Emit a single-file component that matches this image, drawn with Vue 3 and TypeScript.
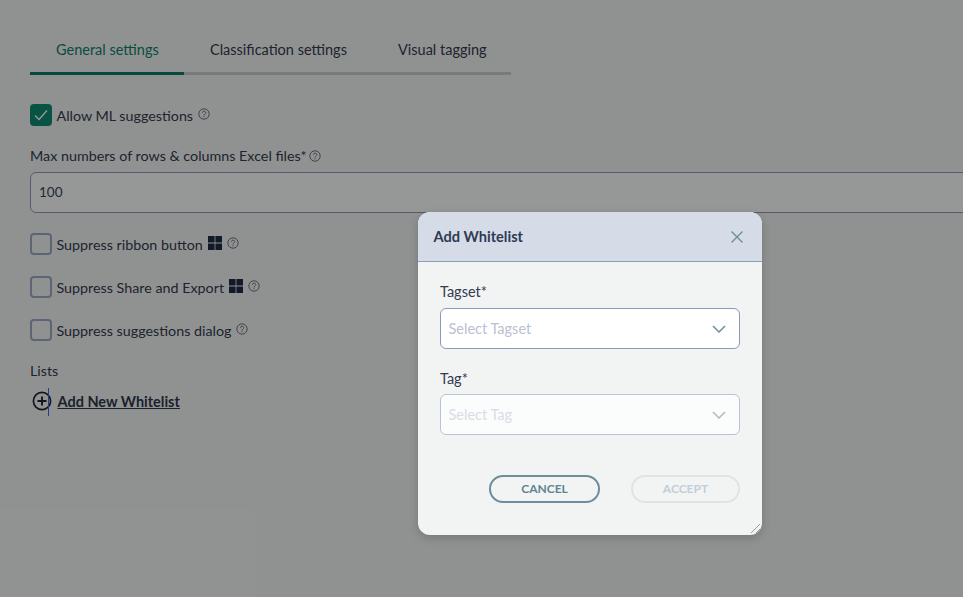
<script setup lang="ts">
const tabs = [
  { label: 'General settings', width: 154, active: true },
  { label: 'Classification settings', width: 188, active: false },
  { label: 'Visual tagging', width: 139, active: false },
]
const suppressions = [
  { label: 'Suppress ribbon button', windows: true },
  { label: 'Suppress Share and Export', windows: true },
  { label: 'Suppress suggestions dialog', windows: false },
]
</script>

<template>
  <div class="page">
    <nav class="tabs">
      <a
        v-for="tab in tabs"
        :key="tab.label"
        class="tab"
        :class="{ active: tab.active }"
        :style="{ width: tab.width + 'px' }"
      >{{ tab.label }}</a>
    </nav>

    <label class="check-row first">
      <span class="box checked">
        <svg width="16" height="16" viewBox="0 0 16 16"><path d="M2 8.500l4 4 8-9" fill="none" stroke="#fff" stroke-width="1.300" /></svg>
      </span>
      <span>Allow ML suggestions</span>
      <svg class="help after" viewBox="0 0 12 12"><use href="#help-glyph" /></svg>
    </label>

    <div class="field-label">
      <span>Max numbers of rows &amp; columns Excel files*</span>
      <svg class="help" viewBox="0 0 12 12"><use href="#help-glyph" /></svg>
    </div>
    <div class="text-input">100</div>

    <label v-for="item in suppressions" :key="item.label" class="check-row">
      <span class="box"></span>
      <span>{{ item.label }}</span>
      <svg v-if="item.windows" class="win" viewBox="0 0 14 14">
        <path d="M0 0h6.600v6.600H0zM7.400 0H14v6.600H7.400zM0 7.400h6.600V14H0zM7.400 7.400H14V14H7.400z" fill="#1f2a44" />
      </svg>
      <svg class="help after" viewBox="0 0 12 12"><use href="#help-glyph" /></svg>
    </label>

    <div class="lists-label">Lists</div>
    <a class="add-link">
      <span class="add-icon">
        <svg width="20" height="20" viewBox="0 0 20 20">
          <circle cx="10" cy="10" r="8.600" fill="none" stroke="#1f2430" stroke-width="1.700" />
          <path d="M5.500 10h9M10 5.500v9" fill="none" stroke="#1f2430" stroke-width="1.900" />
        </svg>
        <span class="caret"></span>
      </span>
      <span>Add New Whitelist</span>
    </a>

    <svg class="defs" width="0" height="0">
      <defs>
        <g id="help-glyph" fill="none" stroke="#5f6672" stroke-width="0.900">
          <circle cx="6" cy="6" r="5.200" />
          <path d="M4.400 4.800c0-2.100 3.300-2.100 3.300-.1 0 1.300-1.700 1.300-1.700 2.800" />
          <path d="M6 8.300v1" />
        </g>
      </defs>
    </svg>

    <div class="scrim"></div>

    <section class="modal">
      <header class="modal-head">
        <h2>Add Whitelist</h2>
        <svg width="14" height="14" viewBox="0 0 14 14"><path d="M1.500 1.500l11 11M12.500 1.500l-11 11" fill="none" stroke="#6f8d99" stroke-width="1.400" /></svg>
      </header>
      <div class="modal-body">
        <div class="modal-label">Tagset*</div>
        <div class="select">
          <span>Select Tagset</span>
          <svg width="14" height="8" viewBox="0 0 14 8"><path d="M1 1l6 6 6-6" fill="none" stroke="#6f8d99" stroke-width="1.500" /></svg>
        </div>
        <div class="modal-label second">Tag*</div>
        <div class="select disabled">
          <span>Select Tag</span>
          <svg width="14" height="8" viewBox="0 0 14 8"><path d="M1 1l6 6 6-6" fill="none" stroke="#a9bcc4" stroke-width="1.500" /></svg>
        </div>
        <div class="actions">
          <button class="btn cancel">CANCEL</button>
          <button class="btn accept">ACCEPT</button>
        </div>
      </div>
      <svg class="grip" width="11" height="11" viewBox="0 0 11 11"><path d="M1 10l9-9M6 10l4-4" fill="none" stroke="#9a9d9f" stroke-width="1" /></svg>
    </section>
  </div>
</template>

<style>
html, body { margin: 0; overflow: hidden; }
</style>

<style scoped>
.page {
  position: relative;
  width: 963px;
  height: 597px;
  box-sizing: border-box;
  padding: 32px 0 0 30px;
  overflow: hidden;
  background: #f1f3f3;
  color: #333b4e;
  font-family: Lato, "Liberation Sans", sans-serif;
  font-size: 14.3px;
}
.tabs {
  display: flex;
  width: 481px;
  height: 43px;
  box-sizing: border-box;
  border-bottom: 3px solid #c9ccd1;
}
.tab {
  box-sizing: border-box;
  height: 43px;
  padding-top: 9px;
  padding-left: 26px;
  line-height: 18px;
  font-size: 14.5px;
  white-space: nowrap;
}
.tab.active {
  color: #0d7f68;
  border-bottom: 3px solid #0c7a63;
}
.check-row {
  display: flex;
  align-items: center;
  height: 22px;
  margin-bottom: 21px;
}
.check-row.first { margin-top: 29px; margin-bottom: 21px; }
.box {
  display: flex;
  align-items: center;
  justify-content: center;
  width: 22px;
  height: 22px;
  box-sizing: border-box;
  margin-right: 4.5px;
  border: 2px solid #9aa7c4;
  border-radius: 4px;
  background: #f1f3f3;
}
.box.checked { background: #0f8a72; border-color: #0f8a72; }
.help { display: block; width: 12px; height: 12px; flex: none; }
.help.after { margin-left: 5px; margin-top: -3px; }
.win { display: block; width: 14px; height: 14px; margin-left: 5px; margin-top: -2px; flex: none; }
.field-label {
  display: flex;
  align-items: center;
  gap: 2px;
  height: 18px;
  line-height: 18px;
}
.text-input {
  width: 1000px;
  height: 41px;
  box-sizing: border-box;
  margin-top: 7px;
  margin-bottom: 20px;
  padding-left: 8px;
  border: 1px solid #8d99b8;
  border-radius: 6px;
  background: #fbfcfc;
  font-size: 13.500px;
  line-height: 38px;
  color: #3a4254;
}
.lists-label { line-height: 18px; margin-top: 21px; }
.add-link {
  display: flex;
  align-items: center;
  gap: 5.500px;
  height: 20px;
  margin-top: 11px;
  font-size: 14.500px;
  font-weight: 700;
  color: #2f3748;
  text-decoration: underline;
}
.add-icon { position: relative; display: block; width: 20px; height: 20px; margin-left: 2px; }
.add-icon svg { display: block; }
.caret {
  position: absolute;
  left: 16px;
  top: -3px;
  width: 1px;
  height: 28px;
  background: #3a6ae8;
}
.defs { position: absolute; }
.scrim {
  position: absolute;
  inset: 0;
  background: rgba(0, 0, 0, 0.4);
}
.modal {
  position: absolute;
  left: 418px;
  top: 212px;
  width: 344px;
  height: 323px;
  overflow: hidden;
  border-radius: 12px;
  background: #f2f4f4;
  box-shadow: 0 3px 10px rgba(0, 0, 0, 0.18);
}
.modal-head {
  display: flex;
  align-items: center;
  justify-content: space-between;
  height: 50px;
  box-sizing: border-box;
  padding: 0 18px 0 15.500px;
  background: #d5dce7;
  border-bottom: 1px solid #8a9fb8;
}
.modal-head h2 {
  margin: 0;
  font-size: 14.600px;
  font-weight: 700;
  color: #2f3a55;
}
.modal-body { padding: 21px 22px 0; }
.modal-label { line-height: 18px; color: #333b4e; font-size: 14.500px; }
.modal-label.second { margin-top: 21px; }
.select {
  display: flex;
  align-items: center;
  justify-content: space-between;
  height: 41px;
  box-sizing: border-box;
  margin-top: 7px;
  padding: 0 13px 0 7.500px;
  border: 1px solid #8d99b8;
  border-radius: 6px;
  background: #fff;
  font-size: 14.500px;
  color: #b9c1d0;
}
.select.disabled {
  margin-top: 6px;
  border-color: #b7c3d6;
  background: #fbfcfc;
  color: #d8dde5;
}
.actions {
  display: flex;
  justify-content: flex-end;
  gap: 31px;
  margin-top: 40px;
}
.btn {
  height: 28px;
  width: 111px;
  padding: 0 0 2px;
  box-sizing: border-box;
  border-radius: 14px;
  background: transparent;
  font-family: inherit;
  font-size: 12px;
  font-weight: 700;
}
.cancel { border: 2px solid #6b8e9b; color: #5f8391; }
.accept { width: 109px; border: 2px solid #dfe3e8; color: #c3ced8; }
.grip { position: absolute; right: 1px; bottom: 1px; }
</style>
